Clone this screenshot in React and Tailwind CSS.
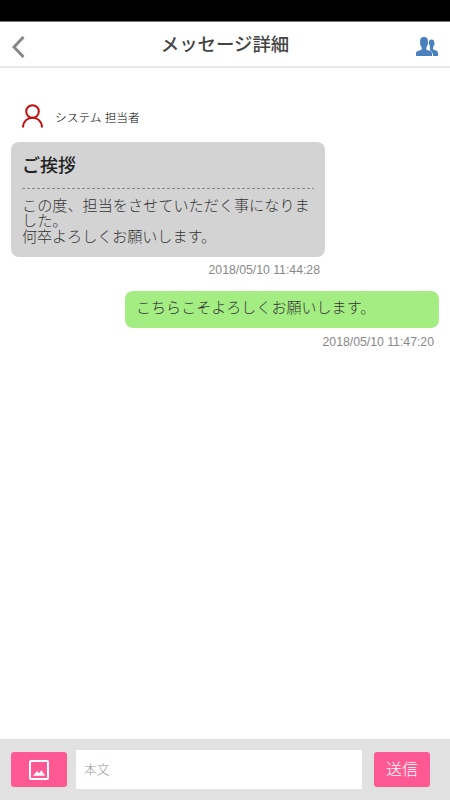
import React, { useState } from 'react';

const Header = ({ title }) => (
    <header className="flex items-start justify-between h-[47px] shrink-0 border-t border-t-[#777777] border-b-2 border-b-[#e9e9e9] bg-white">
        <button type="button" aria-label="back" className="w-[60px] pl-[12px] pt-[14px]">
            <svg width="13" height="22" viewBox="0 0 13 22" fill="none" stroke="#888888" strokeWidth="3">
                <path d="M11.5 1 L2 11 L11.5 21" />
            </svg>
        </button>
        <h1 className="pt-[10px] text-[18.4px] leading-[26px] font-medium text-[#444444] whitespace-nowrap">{title}</h1>
        <button type="button" aria-label="members" className="flex justify-end w-[60px] pr-[12px] pt-[15px]">
            <svg width="22" height="19" viewBox="0 0 22 19" fill="#4a80bd">
                <path d="M13.7 8.4 C12.8 7.2 12.3 3.5 14.1 2.9 C16.3 2 18.6 3.1 18.3 6 C18.8 6.2 18.5 7.8 18 8 C17.8 9.3 17.3 9.8 17.1 10.3 V12.3 C18.7 13.6 22 13.3 22 16.3 V18.9 H17 C17 15.4 15.3 14.5 14 13.6 Z" />
                <path d="M0 19 V16.3 C0 13.7 3.7 13.8 5.7 12.5 V10.6 C5 10 4.7 9 4.6 8 C3.8 7.6 3.6 5.9 4.2 5.6 C3.7 1.8 5.2 0 8 0 C11 0 12.4 1.8 11.8 5.6 C12.5 5.9 12.1 7.6 11.4 8 C11.3 9 11 10 10.3 10.6 V12.5 C12.3 13.8 16 13.7 16 16.3 V19 Z" />
            </svg>
        </button>
    </header>
);

const Sender = ({ name }) => (
    <div className="flex items-start pl-[11px] h-[38px]">
        <svg width="21" height="24" viewBox="0 0 21 24" fill="none" stroke="#c40d0d" strokeWidth="2">
            <circle cx="10.5" cy="7.5" r="6.3" />
            <path d="M1 23.5 C1.3 10.4 19.7 10.4 20 23.5" />
        </svg>
        <span className="ml-[12px] mt-[4px] text-[11.7px] leading-[20px] font-light text-black">{name}</span>
    </div>
);

const App = () => {
    const [body, setBody] = useState('');

    return (
        <div className="flex flex-col h-screen w-full bg-white font-['Liberation_Sans','Noto_Sans_CJK_JP',sans-serif]">
            {/* Status bar */}
            <div className="h-[21px] shrink-0 bg-black" />
            <Header title="メッセージ詳細" />

            {/* Messages */}
            <main className="flex-1 px-[11px] pt-[36px]">
                <Sender name="システム 担当者" />

                <div className="w-[314px]">
                    <div className="h-[115px] rounded-[8px] bg-[#d3d3d3] px-[11px] pt-[11px]">
                        <h2 className="h-[35px] text-[18px] leading-[27px] font-medium text-[#222222]">ご挨拶</h2>
                        <svg className="block w-full" height="1">
                            <line x1="0" y1="0.5" x2="292" y2="0.5" stroke="#888888" strokeDasharray="3 2" />
                        </svg>
                        <p className="mt-[9px] -mr-[4px] text-[15.15px] leading-[15.3px] font-light text-[#333333]">
                            この度、担当をさせていただく事になりま<br />した。<br />
                            <span className="tracking-[-0.1px]">何卒よろしくお願いします。</span>
                        </p>
                    </div>
                    <p className="pr-[5px] pt-[5px] text-right text-[12.25px] leading-[16px] text-[#888888]">2018/05/10 11:44:28</p>
                </div>

                <div className="w-[314px] ml-auto mt-[13px]">
                    <div className="h-[37px] rounded-[8px] bg-[#a4ed83] px-[11px] pt-[9px]">
                        <p className="text-[15.05px] leading-[16px] font-light text-[#333333]">こちらこそよろしくお願いします。</p>
                    </div>
                    <p className="pr-[5px] pt-[6px] text-right text-[12.25px] leading-[16px] text-[#888888]">2018/05/10 11:47:20</p>
                </div>
            </main>

            {/* Input bar */}
            <footer className="flex items-center h-[61px] shrink-0 bg-[#e1e1e1] pl-[11px]">
                <button type="button" aria-label="image" className="flex items-center justify-center w-[56px] h-[35px] rounded-[3px] bg-[#ff5993]">
                    <svg width="20" height="20" viewBox="0 0 20 20" fill="none">
                        <rect x="1" y="1" width="18" height="18" rx="1" stroke="#ffffff" strokeWidth="2" />
                        <path d="M4 15.7 L8 11 L10 13.2 L12.5 10.3 L16 15.7 Z" fill="#ffffff" />
                    </svg>
                </button>
                <input
                    type="text"
                    className="ml-[9px] w-[286px] h-[39px] bg-white px-[8px] text-[12.8px] font-light text-[#333333] placeholder:text-[#999999] outline-none"
                    placeholder="本文"
                    value={body}
                    onChange={(e) => setBody(e.target.value)}
                />
                <button type="button" className="ml-[12px] w-[56px] h-[35px] rounded-[3px] bg-[#ff5993] text-[16px] leading-[24px] font-light text-white">送信</button>
            </footer>
        </div>
    );
};

export default App;
